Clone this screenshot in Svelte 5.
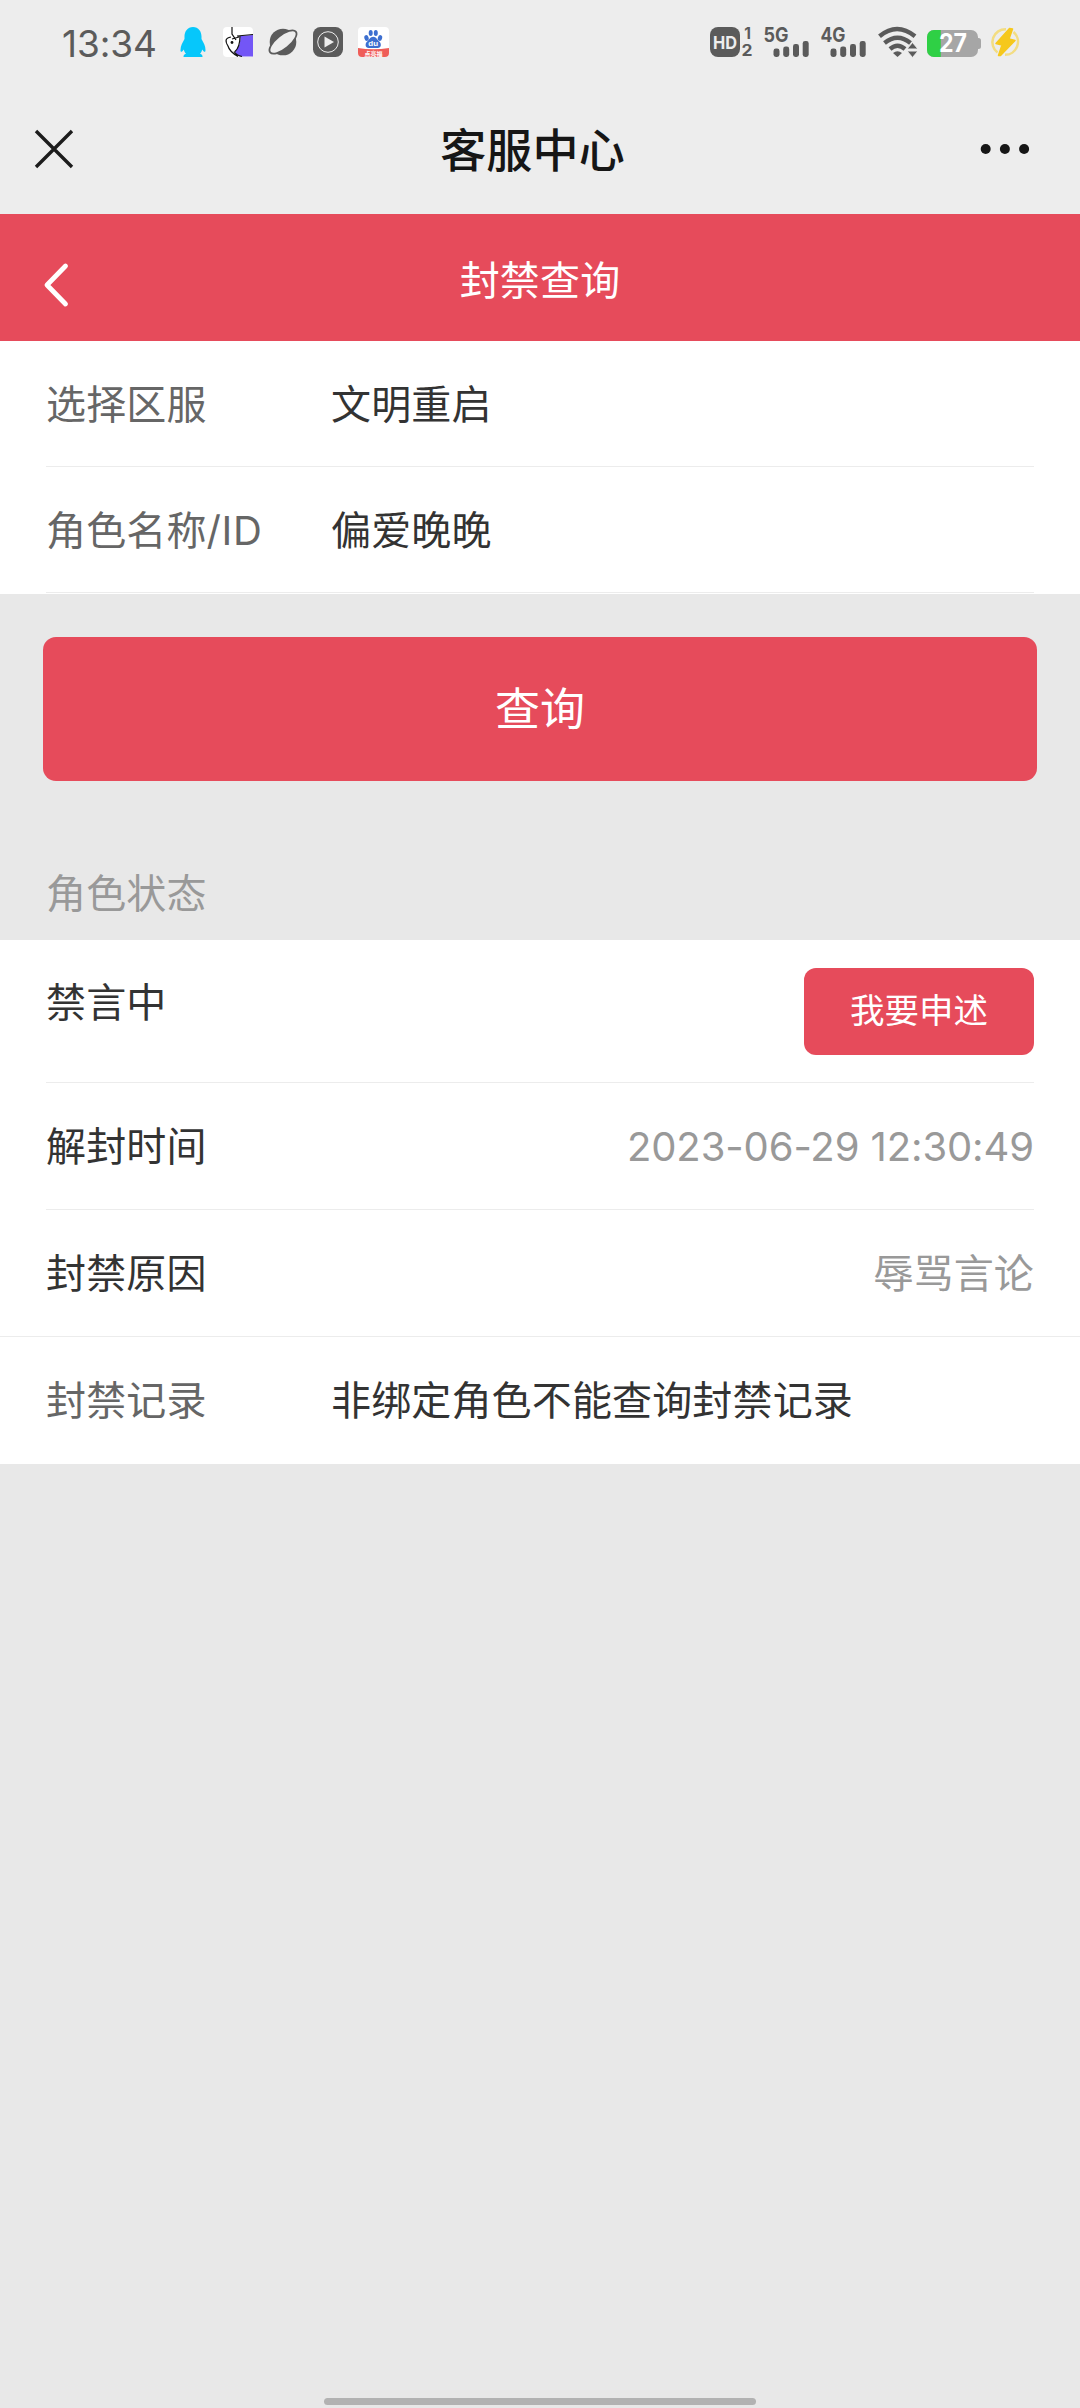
<script lang="ts">
  interface Field {
    label: string;
    latin?: string;
    value: string;
  }

  const fields: Field[] = [
    { label: '选择区服', value: '文明重启' },
    { label: '角色名称', latin: '/ID', value: '偏爱晚晚' }
  ];

  const status = {
    state: '禁言中',
    liftedAt: '2023-06-29 12:30:49',
    reason: '辱骂言论',
    record: '非绑定角色不能查询封禁记录'
  };

  const networks = ['5G', '4G'];
  const battery = 27;
</script>

<div class="screen">
  <div class="statusbar">
    <span class="clock">13:34</span>

    <div class="apps">
      <svg width="30" height="30" viewBox="0 0 30 30">
        <path fill="#06c7fb" d="M15 0C9.500 0 6.500 4.500 6.500 9.500V12C4.500 15.500 2.500 19 2.500 23c0 3 1.700 2 3.200-.5.5 2 1.300 3.300 2.300 4.300-2 .7-2.500 1.500-2.500 3.200h19c0-1.700-.5-2.500-2.500-3.200 1-1 1.800-2.300 2.300-4.300C25.800 25 27.500 26 27.500 23c0-4-2-7.500-4-11V9.500C23.500 4.500 20.500 0 15 0Z" />
      </svg>
      <svg width="30" height="30" viewBox="0 0 30 30">
        <rect width="30" height="30" rx="4" fill="#fff" />
        <path d="M17 9l13-1v21.500H17c-2-1-4-2.500-5-5 4-4 6-9 5-15.500Z" fill="#7356f6" />
        <path d="M9 0v7l4 6M9 12l7-2M14 9l16-1.500M17 9c0 6-1 12-5 15.500M8 10c-6 1-6 4-3 9 1 4 4 7 10 10.500M11 24.500c2 3 4 4 8 5" fill="none" stroke="#111" stroke-width="1.200" />
        <circle cx="9" cy="15.500" r="1.400" fill="#111" />
      </svg>
      <svg width="30" height="30" viewBox="0 0 30 30">
        <circle cx="15" cy="15" r="13.300" fill="#5b5b5b" />
        <ellipse cx="15" cy="15" rx="16.500" ry="6.800" transform="rotate(-39 15 15)" fill="#ededed" stroke="#5b5b5b" stroke-width="1.800" />
      </svg>
      <svg width="30" height="30" viewBox="0 0 30 30">
        <rect width="30" height="30" rx="7.500" fill="#5b5b5b" />
        <circle cx="15" cy="15" r="10.300" fill="none" stroke="#ededed" stroke-width="1" />
        <path d="M11.500 9.500v11l9.500-5.500Z" fill="#ededed" />
      </svg>
      <svg width="31" height="30" viewBox="0 0 31 30">
        <rect width="31" height="30" rx="4" fill="#fff" />
        <g fill="#3d6fd0">
          <ellipse cx="8.500" cy="11" rx="2.100" ry="2.900" transform="rotate(-18 8.500 11)" />
          <ellipse cx="12.700" cy="6" rx="2" ry="3" />
          <ellipse cx="17.800" cy="6" rx="2" ry="3" />
          <ellipse cx="22" cy="11" rx="2.100" ry="2.900" transform="rotate(18 22 11)" />
          <path d="M15.200 9.800c-3 0-4 3-6 4.700-2.400 2-2.200 6.500 1.600 6.500h8.900c3.800 0 4-4.500 1.500-6.500-2-1.700-3-4.700-6-4.700Z" />
        </g>
        <text x="15.200" y="19" class="du">du</text>
        <path d="M0 21q15 2.500 31 0v5a4 4 0 0 1-4 4H4a4 4 0 0 1-4-4Z" fill="#ef5d58" />
        <text x="15.500" y="28.700" class="ribbon">点亮福</text>
      </svg>
    </div>

    <div class="signals">
      <svg width="43" height="30" viewBox="0 0 43 30">
        <rect width="30" height="30" rx="8" fill="#5b5b5b" />
        <text x="15" y="21.500" class="hd-text" textLength="24" lengthAdjust="spacingAndGlyphs">HD</text>
        <text x="37.500" y="11.500" class="sim">1</text>
        <text x="37" y="29" class="sim" textLength="11" lengthAdjust="spacingAndGlyphs">2</text>
      </svg>
      {#each networks as net}
        <svg class="net" width="46" height="30" viewBox="0 0 46 30">
          <text x="-0.500" y="14.500" class="net-text" textLength="25" lengthAdjust="spacingAndGlyphs">{net}</text>
          <g fill="#5b5b5b">
            <rect x="9.500" y="21.500" width="6" height="8.500" rx="2.400" />
            <rect x="19.200" y="19.500" width="6" height="10.500" rx="2.400" />
            <rect x="29" y="17" width="6" height="13" rx="2.400" />
            <rect x="38.700" y="14" width="6" height="16" rx="2.400" />
          </g>
        </svg>
      {/each}
      <svg class="wifi" width="40" height="30" viewBox="0 0 40 30">
        <g fill="none" stroke="#5b5b5b" stroke-width="4.400">
          <path d="M1.500 9.300q17.500-14.500 35.500 0" />
          <path d="M6.500 16q13-10.500 26 0" />
          <path d="M12 22q7.500-6.500 15 0" />
        </g>
        <path d="M15 26q4.500-3.500 9 0l-4.500 4Z" fill="#5b5b5b" />
        <path d="M34.500 15.500l5.500 6.500h-11ZM34.500 30.500l5.500-6.500h-11Z" fill="#5b5b5b" stroke="#ededed" stroke-width="1" />
      </svg>
      <svg class="battery" width="54" height="27" viewBox="0 0 54 27">
        <defs>
          <clipPath id="cell"><rect width="51" height="27" rx="7" /></clipPath>
        </defs>
        <path d="M50 8h1.500q2.500 0 2.500 2.500v6q0 2.500-2.500 2.500H50Z" fill="#a6a6a6" />
        <g clip-path="url(#cell)">
          <rect width="51" height="27" fill="#a6a6a6" />
          <rect width={(51 * battery) / 100} height="27" fill="#2fd045" />
        </g>
        <text x="26" y="22.300" class="level" textLength="28" lengthAdjust="spacingAndGlyphs">{battery}</text>
      </svg>
      <svg width="32" height="30" viewBox="0 0 32 30">
        <g fill="none" stroke="#f3dd83" stroke-width="2.500">
          <path d="M8.500 25.500A13 13 0 0 1 17 2.200" />
          <path d="M24.500 5A13 13 0 0 1 16 27.800" />
        </g>
        <path d="M20.500 1.500L7 16.500l6 1.500-3.500 10.500h2L26 13.500l-6-1.500L23.500 2Z" fill="#f6c81c" stroke="#f6c81c" stroke-width="1.500" stroke-linejoin="round" />
      </svg>
    </div>
  </div>

  <header class="titlebar">
    <svg width="38" height="38" viewBox="0 0 38 38">
      <path d="M1 1l36 36M37 1L1 37" stroke="#1c1c1c" stroke-width="3.400" />
    </svg>
    <h1>客服中心</h1>
    <svg class="more" width="50" height="12" viewBox="0 0 50 12">
      <circle cx="5.700" cy="6" r="5" /><circle cx="24.900" cy="6" r="5" /><circle cx="44.100" cy="6" r="5" />
    </svg>
  </header>

  <nav class="navbar">
    <svg class="back" width="26" height="44" viewBox="0 0 26 44">
      <path d="M22.500 3L4 22l18.500 19" fill="none" stroke="#fff" stroke-width="4.800" stroke-linecap="round" stroke-linejoin="round" />
    </svg>
    <h2>封禁查询</h2>
  </nav>

  <section class="card form">
    {#each fields as f}
      <div class="row">
        <span class="label">{f.label}{#if f.latin}<span class="latin">{f.latin}</span>{/if}</span>
        <span class="value">{f.value}</span>
      </div>
    {/each}
  </section>

  <button class="query">查询</button>

  <div class="section-title">角色状态</div>

  <section class="card">
    <div class="row state">
      <span class="name">{status.state}</span>
      <button class="appeal">我要申述</button>
    </div>
    <div class="row">
      <span class="name">解封时间</span>
      <span class="detail latin date">{status.liftedAt}</span>
    </div>
    <div class="row last">
      <span class="name">封禁原因</span>
      <span class="detail">{status.reason}</span>
    </div>
    <div class="row record">
      <span class="label">封禁记录</span>
      <span class="value">{status.record}</span>
    </div>
  </section>

  <div class="home-indicator"></div>
</div>

<style>
  :global(body) {
    background: #e8e8e8;
  }
  .screen {
    box-sizing: border-box;
    width: 1080px;
    height: 2408px;
    display: flex;
    flex-direction: column;
    background: #e8e8e8;
    color: #333;
    font-family: 'Noto Sans CJK SC', sans-serif;
    font-size: 40px;
    line-height: 60px;
    letter-spacing: 0.15px;
    overflow: hidden;
  }
  svg {
    display: block;
    flex: none;
    overflow: visible;
    letter-spacing: 0;
  }
  h1,
  h2 {
    margin: 0;
  }
  button {
    box-sizing: border-box;
    border: 0;
    padding: 0 0 5px;
    background: #e64b5b;
    color: #fff;
    font-family: inherit;
  }
  .statusbar {
    display: flex;
    align-items: center;
    height: 84px;
    padding: 0 59px 0 62px;
    background: #ededed;
  }
  .clock {
    width: 116px;
    padding-top: 4px;
    color: #5b5b5b;
    font-family: Inter, sans-serif;
    font-size: 37px;
    letter-spacing: -0.1px;
  }
  .apps {
    display: flex;
    gap: 15px;
  }
  .signals {
    display: flex;
    margin-left: auto;
  }
  .net {
    margin-left: 11px;
  }
  .wifi {
    margin-left: 11px;
  }
  .battery {
    margin: 3px 8px 0 9px;
  }
  .du {
    fill: #fff;
    font: 700 8px 'Liberation Sans', sans-serif;
    text-anchor: middle;
  }
  .ribbon {
    fill: #fff;
    font: 700 6px 'Noto Sans CJK SC', sans-serif;
    text-anchor: middle;
  }
  .hd-text {
    fill: #ededed;
    font: 700 18px Inter, sans-serif;
    text-anchor: middle;
  }
  .sim {
    fill: #5b5b5b;
    font: 700 15.500px Inter, sans-serif;
    text-anchor: middle;
  }
  .net-text {
    fill: #5b5b5b;
    font: 700 20px Inter, sans-serif;
  }
  .level {
    fill: #fff;
    font: 700 25px Inter, sans-serif;
    text-anchor: middle;
  }
  .titlebar {
    display: flex;
    align-items: center;
    justify-content: space-between;
    height: 130px;
    padding: 0 50px 0 35px;
    background: #ededed;
  }
  .titlebar h1 {
    padding: 0 0 4px 12px;
    color: #161616;
    font-size: 46px;
    font-weight: 500;
  }
  .more {
    fill: #161616;
  }
  .navbar {
    display: flex;
    align-items: center;
    height: 127px;
    padding: 0 69px 0 43px;
    background: #e64b5b;
    color: #fff;
  }
  .back {
    margin-top: 14px;
  }
  .navbar h2 {
    flex: 1;
    padding-top: 1px;
    font-size: 40px;
    font-weight: 400;
    text-align: center;
  }
  .card {
    background: #fff;
  }
  .form {
    padding-bottom: 1px;
  }
  .row {
    box-sizing: border-box;
    display: flex;
    align-items: center;
    height: 127px;
    margin: 0 46px;
    padding-bottom: 4px;
    border-bottom: 1px solid #ececec;
  }
  .form .row {
    height: 126px;
  }
  .label {
    width: 285px;
    color: #666;
  }
  .detail {
    margin-left: auto;
    color: #999;
  }
  .latin {
    font-family: Inter, sans-serif;
    font-weight: 400;
  }
  .label .latin {
    line-height: 0;
    letter-spacing: 0.6px;
  }
  .date {
    padding-top: 5px;
    letter-spacing: -0.1px;
  }
  .state {
    height: 143px;
    padding-bottom: 0;
  }
  .state .name {
    margin-bottom: 22px;
  }
  .state .appeal {
    margin-left: auto;
  }
  .row.last,
  .row.record {
    margin: 0;
    padding: 0 46px 5px;
  }
  .record {
    border-bottom: 0;
  }
  .query {
    height: 144px;
    margin: 43px 43px 0;
    border-radius: 13px;
    font-size: 45px;
  }
  .section-title {
    margin: 80px 46px 19px;
    color: #999;
  }
  .appeal {
    width: 230px;
    height: 87px;
    padding-bottom: 6px;
    border-radius: 12px;
    font-size: 34.500px;
  }
  .home-indicator {
    width: 432px;
    height: 7px;
    margin: auto auto 3px;
    border-radius: 4px;
    background: #b2b2b2;
  }
</style>
